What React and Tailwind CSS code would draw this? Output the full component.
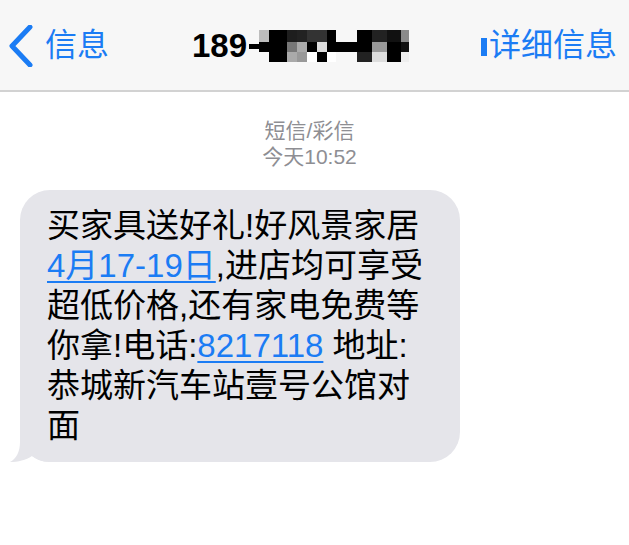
const blue = "text-[#1b7cf4]";

const mosaic = [
  ["#bdbdbd", "#000", "#1e1e1e", "#222", "#333", "#333", "#000", "transparent", "#000", "#222", "#111", "#8a8a8a"],
  ["#000", "#000", "#777", "#aaa", "#000", "#ddd", "#000", "#000", "#000", "#999", "#000", "#111"],
  ["transparent", "#000", "#aaa", "#999", "#fff", "#000", "#fff", "transparent", "#222", "#ddd", "#000", "#eee"],
];

function Mosaic() {
  return (
    <div className="grid grid-cols-[10px_18px_10px_10px_10px_10px_9px_21px_15px_15px_14px_8px] grid-rows-[12px_10px_10px] mt-[1px]">
      {mosaic.flat().map((c, i) => (
        <div key={i} style={{ backgroundColor: c }} />
      ))}
    </div>
  );
}

function Header() {
  return (
    <div className="h-[92px] bg-[#f7f7f7] border-b-2 border-[#d2d2d2] flex items-center pl-[8px] pr-[12px]">
      <div className={`flex items-center ${blue}`}>
        <svg width="26" height="42" viewBox="0 0 26 42" className="mt-[1px]">
          <polyline points="22,2 4,21 22,40" fill="none" stroke="#1b7cf4" strokeWidth="5" strokeLinecap="round" strokeLinejoin="round" />
        </svg>
        <span className="ml-[11px] text-[32px] leading-none">信息</span>
      </div>
      <div className="flex-1 flex items-center pl-[83px]">
        <span className="text-[33px] font-bold leading-none text-black font-['Liberation_Sans',sans-serif]">189</span>
        <div className="w-[10px] h-[5px] bg-black ml-[2px] mt-[3px]" />
        <Mosaic />
      </div>
      <div className={`flex items-center ${blue}`}>
        <div className="w-[6px] h-[18px] bg-[#1b7cf4] mr-[2px] mt-[4px]" />
        <span className="text-[32px] leading-none">详细信息</span>
      </div>
    </div>
  );
}

function Link({ children }) {
  return <span className="text-[#1b7cf4] underline decoration-[2px] underline-offset-[4px]">{children}</span>;
}

function Bubble() {
  return (
    <div className="relative ml-[20px] mt-[20px] w-[440px] bg-[#e5e5ea] rounded-[30px] pl-[27px] pt-[16px] pb-[16px]">
      <svg width="41" height="32" viewBox="0 0 41 32" className="absolute left-[-11px] bottom-0">
        <path d="M11 0 L11 12 C11 22 7 29 1 32 C9 32 17 30 23 26 C27 29 33 32 41 32 L41 0 Z" fill="#e5e5ea" />
      </svg>
      <p className="relative whitespace-nowrap text-[33px] leading-[40px] text-black">
        买家具送好礼!好风景家居
        <br />
        <Link>4月17-19日</Link>,进店均可享受
        <br />
        超低价格,还有家电免费等
        <br />
        你拿!电话:<Link>8217118</Link> 地址:
        <br />
        恭城新汽车站壹号公馆对
        <br />
        面
      </p>
    </div>
  );
}

export default function App() {
  return (
    <div className="relative w-[629px] h-[545px] bg-white overflow-hidden font-['Liberation_Sans','Noto_Sans_CJK_SC',sans-serif]">
      <Header />
      <div className="flex flex-col items-center pt-[26px] pr-[10px] text-[21px] leading-[26px] text-[#8e8e93]">
        <span>短信/彩信</span>
        <span>今天10:52</span>
      </div>
      <Bubble />
    </div>
  );
}
